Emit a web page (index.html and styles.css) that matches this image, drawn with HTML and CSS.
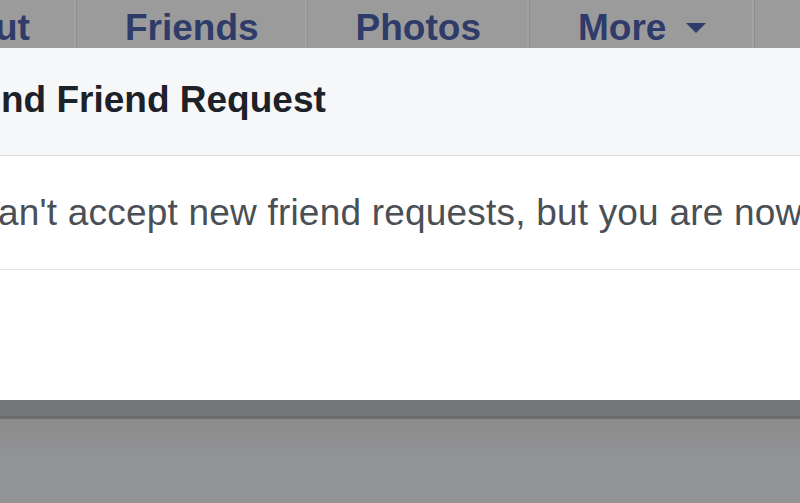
FILE: index.html
```html
<!DOCTYPE html>
<html lang="en">
<head>
<meta charset="utf-8">
<title>Friend Request</title>
<link rel="stylesheet" href="styles.css">
</head>
<body>
<div class="page">
  <nav class="tabs">
    <div class="tab tab-first"><span class="tab-label">ut</span></div>
    <div class="tab"><span class="tab-label">Friends</span></div>
    <div class="tab"><span class="tab-label">Photos</span></div>
    <div class="tab"><span class="tab-label">More</span><span class="caret"></span></div>
    <div class="tab tab-rest"></div>
  </nav>
  <div class="dialog">
    <div class="dlg-head"><h2 class="dlg-title">nd Friend Request</h2></div>
    <div class="dlg-body"><p class="dlg-text">an't accept new friend requests, but you are now</p></div>
    <div class="dlg-foot"></div>
  </div>
  <div class="below">
    <div class="below-band"></div>
    <div class="below-line"></div>
    <div class="below-fill"></div>
  </div>
</div>
</body>
</html>
```

FILE: styles.css
```css
html, body {
  margin: 0;
  padding: 0;
}
body {
  width: 800px;
  height: 503px;
  overflow: hidden;
  background: #929395;
  font-family: "Liberation Sans", Arial, Helvetica, sans-serif;
}
.page {
  display: flex;
  flex-direction: column;
  height: 503px;
}
.tabs {
  display: flex;
  height: 48px;
  background: #9b9b9b;
  flex: none;
}
.tab {
  display: flex;
  align-items: center;
  padding: 0 48px;
  border-right: 1px solid #8e8e8e;
  box-shadow: inset -2px 0 0 #a2a2a2;
  color: #2f3b69;
  font-weight: bold;
  font-size: 37px;
  white-space: nowrap;
}
.tab-label {
  display: block;
  line-height: 48px;
  position: relative;
  top: 4px;
}
.tab-first {
  padding: 0 46px 0 0;
  margin-left: -5px;
}
.tab-rest {
  flex: 1;
  border-right: none;
  box-shadow: none;
}
.caret {
  width: 0;
  height: 0;
  margin-left: 20px;
  margin-top: 7px;
  border-left: 10px solid transparent;
  border-right: 10px solid transparent;
  border-top: 10px solid #2f3b69;
}
.dialog {
  flex: none;
  display: flex;
  flex-direction: column;
  background: #fff;
}
.dlg-head {
  height: 107px;
  display: flex;
  align-items: center;
  background: #f6f7f9;
  border-bottom: 1px solid #dddfe2;
}
.dlg-title {
  margin: 0 0 4px 1px;
  font-size: 37px;
  line-height: 43px;
  font-weight: bold;
  color: #1d2129;
  white-space: nowrap;
}
.dlg-body {
  height: 113px;
  display: flex;
  align-items: center;
  border-bottom: 1px solid #e3e3e3;
  overflow: hidden;
}
.dlg-text {
  margin: 0 0 0 -2px;
  font-size: 37px;
  line-height: 43px;
  letter-spacing: 0.2px;
  color: #4b4f56;
  white-space: nowrap;
}
.dlg-foot {
  height: 130px;
  background: #fefefe;
}
.below {
  flex: 1;
  display: flex;
  flex-direction: column;
}
.below-band {
  height: 16px;
  background: #757678;
}
.below-line {
  height: 3px;
  background: #6c6c6e;
}
.below-fill {
  flex: 1;
  background: linear-gradient(#8b8b8b, #929395 45%, #929395);
}
```
